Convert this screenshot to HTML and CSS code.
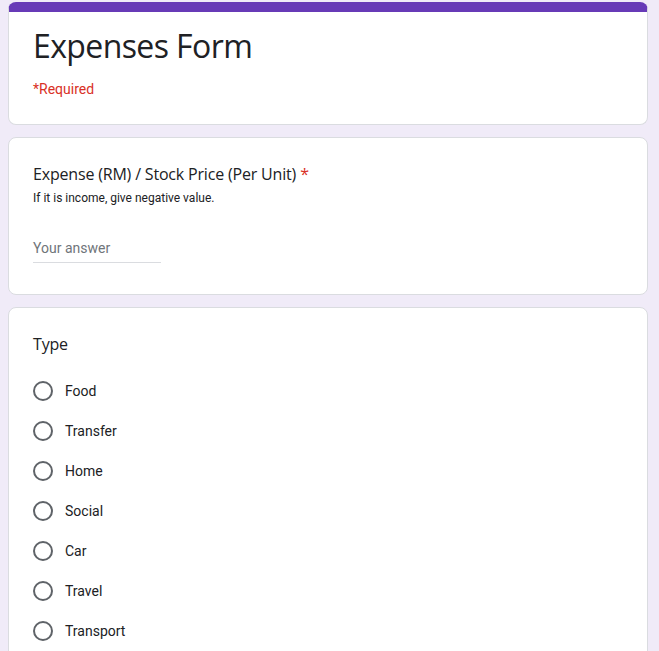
FILE: index.html
```html
<!DOCTYPE html>
<html>
<head>
<meta charset="utf-8">
<link rel="stylesheet" href="styles.css">
</head>
<body>
<div class="page">
  <div class="card header">
    <h1 class="title">Expenses Form</h1>
    <div class="required">*Required</div>
  </div>
  <div class="card">
    <div class="q-title">Expense (RM) / Stock Price (Per Unit) <span class="star">*</span></div>
    <div class="q-desc">If it is income, give negative value.</div>
    <div class="answer">Your answer</div>
  </div>
  <div class="card">
    <div class="q-title">Type</div>
    <div class="options">
      <div class="option"><span class="radio"></span><span class="label">Food</span></div>
      <div class="option"><span class="radio"></span><span class="label">Transfer</span></div>
      <div class="option"><span class="radio"></span><span class="label">Home</span></div>
      <div class="option"><span class="radio"></span><span class="label">Social</span></div>
      <div class="option"><span class="radio"></span><span class="label">Car</span></div>
      <div class="option"><span class="radio"></span><span class="label">Travel</span></div>
      <div class="option"><span class="radio"></span><span class="label">Transport</span></div>
    </div>
  </div>
</div>
</body>
</html>
```
FILE: styles.css
```css
html, body {
  margin: 0;
  padding: 0;
  background: #f0ebf8;
  font-family: Roboto, "Liberation Sans", sans-serif;
  color: #202124;
}
.page {
  width: 640px;
  margin: 2px 0 0 8px;
  display: flex;
  flex-direction: column;
  gap: 12px;
}
.card {
  background: #fff;
  border: 1px solid #dadce0;
  border-radius: 8px;
  padding: 24px 24px 31px;
}
.header {
  border-top: 10px solid #673ab7;
  padding: 14px 24px 25px;
}
.title {
  margin: 0;
  font-family: "Open Sans", sans-serif;
  font-weight: 400;
  font-size: 32px;
  line-height: 40px;
  letter-spacing: -0.6px;
  color: #202124;
}
.required {
  margin-top: 13px;
  font-size: 14px;
  line-height: 20px;
  color: #d93025;
}
.q-title {
  font-family: "Open Sans", sans-serif;
  font-size: 16px;
  line-height: 24px;
  letter-spacing: -0.18px;
  color: #202124;
}
.star {
  color: #d93025;
}
.q-desc {
  margin-top: 3px;
  font-size: 12px;
  line-height: 18px;
  color: #202124;
}
.answer {
  margin-top: 31px;
  width: 128px;
  font-size: 14px;
  line-height: 20px;
  padding-bottom: 4px;
  color: #70757a;
  border-bottom: 1px solid #dadce0;
}
.options {
  margin-top: 15px;
  display: flex;
  flex-direction: column;
}
.option {
  height: 40px;
  display: flex;
  align-items: center;
  gap: 12px;
}
.radio {
  width: 16px;
  height: 16px;
  border: 2px solid #5f6368;
  border-radius: 50%;
  flex: none;
}
.label {
  font-size: 14px;
  line-height: 20px;
  color: #202124;
}
```
